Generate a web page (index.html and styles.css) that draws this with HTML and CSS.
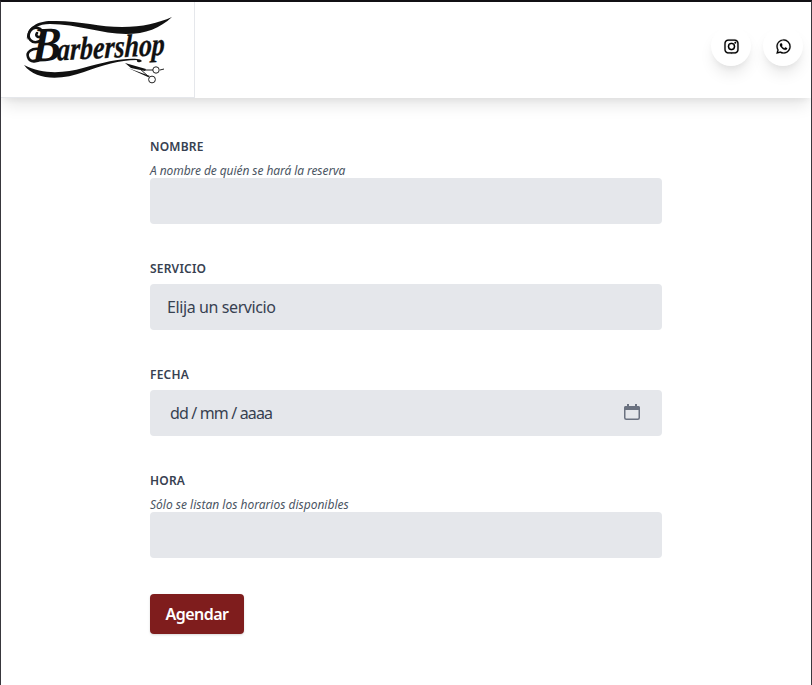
FILE: index.html
```html
<!DOCTYPE html>
<html lang="es">
<head>
<meta charset="utf-8">
<title>Barbershop</title>
<link rel="stylesheet" href="styles.css">
</head>
<body>
<header class="header">
  <a class="brand" href="#" aria-label="Barbershop">
    <svg class="logo" viewBox="0 0 193 95" width="193" height="95">
      <path d="M26 38C25 25 37 19 50 19C76 18 98 25 121 25C142 25 157 21 171 15C159 26 145 32 125 32C101 32 76 22 49 22C38 22 29 26 26 38Z"/>
      <path d="M23 63C42 73 64 71 82 66C104 60 121 56 136 57C141 57 142 60 139 60C137 61 135 59 136 58C118 58 102 63 83 70C61 78 35 79 23 63Z"/>
      <path class="curl" d="M39 39C31 43 25 36 29 29C33 23 42 26 41 32C40 37 33 35 36 31"/>
      <path class="curl" d="M38 47C31 46 25 50 27 55C29 61 36 60 40 57"/>
      <g transform="rotate(-3 28 60) skewX(-5)">
        <text class="letter-b" x="36" y="60" textLength="29" lengthAdjust="spacingAndGlyphs">B</text>
        <text class="letters" x="61" y="60" textLength="108" lengthAdjust="spacingAndGlyphs">arbershop</text>
      </g>
      <path d="M124 61L145 67L144 69L130 66ZM127 66L149 74L147 75Z"/>
      <path class="scissors" d="M143 68H152M159 68L163 67M138 66L148 75"/>
      <circle class="scissors" cx="155" cy="68" r="3.2"/>
      <circle class="scissors" cx="151" cy="77.5" r="3.4"/>
    </svg>
  </a>
  <nav class="social">
    <a class="round" href="#" aria-label="Instagram">
      <svg class="icon" viewBox="0 0 24 24"><path d="M11.999 7.377a4.623 4.623 0 1 0 0 9.248 4.623 4.623 0 0 0 0-9.248zm0 7.627a3.004 3.004 0 1 1 0-6.008 3.004 3.004 0 0 1 0 6.008z"/><circle cx="16.806" cy="7.207" r="1.078"/><path d="M20.533 6.111A4.605 4.605 0 0 0 17.9 3.479a6.606 6.606 0 0 0-2.186-.42c-.963-.042-1.268-.054-3.71-.054s-2.755 0-3.71.054a6.554 6.554 0 0 0-2.184.42 4.6 4.6 0 0 0-2.633 2.632 6.585 6.585 0 0 0-.419 2.186c-.043.962-.056 1.267-.056 3.71 0 2.442 0 2.753.056 3.71.015.748.156 1.486.419 2.187a4.61 4.61 0 0 0 2.634 2.632 6.584 6.584 0 0 0 2.185.45c.963.042 1.268.055 3.71.055s2.755 0 3.71-.055a6.615 6.615 0 0 0 2.186-.419 4.613 4.613 0 0 0 2.633-2.633c.263-.7.404-1.438.419-2.186.043-.962.056-1.267.056-3.71s0-2.753-.056-3.71a6.581 6.581 0 0 0-.421-2.217zm-1.218 9.532a5.043 5.043 0 0 1-.311 1.688 2.987 2.987 0 0 1-1.712 1.711 4.985 4.985 0 0 1-1.67.311c-.95.044-1.218.055-3.654.055-2.438 0-2.687 0-3.655-.055a4.96 4.96 0 0 1-1.669-.311 2.985 2.985 0 0 1-1.719-1.711 5.08 5.08 0 0 1-.311-1.669c-.043-.95-.053-1.218-.053-3.654 0-2.437 0-2.686.053-3.655a5.038 5.038 0 0 1 .311-1.687c.305-.789.93-1.41 1.719-1.712a5.01 5.01 0 0 1 1.669-.311c.951-.043 1.218-.055 3.655-.055s2.687 0 3.654.055a4.96 4.96 0 0 1 1.67.311 2.991 2.991 0 0 1 1.712 1.712 5.08 5.08 0 0 1 .311 1.669c.043.951.055 1.218.055 3.655 0 2.436 0 2.698-.043 3.654z"/></svg>
    </a>
    <a class="round" href="#" aria-label="WhatsApp">
      <svg class="icon" viewBox="0 0 24 24"><path fill-rule="evenodd" d="M18.403 5.633A8.919 8.919 0 0 0 12.053 3c-4.948 0-8.976 4.027-8.978 8.977 0 1.582.413 3.126 1.198 4.488L3 21.116l4.759-1.249a8.981 8.981 0 0 0 4.29 1.093h.004c4.947 0 8.975-4.027 8.977-8.977a8.926 8.926 0 0 0-2.627-6.35m-6.35 13.812h-.003a7.446 7.446 0 0 1-3.798-1.041l-.272-.162-2.824.741.753-2.753-.177-.282a7.448 7.448 0 0 1-1.141-3.971c.002-4.114 3.349-7.461 7.465-7.461a7.413 7.413 0 0 1 5.275 2.188 7.42 7.42 0 0 1 2.183 5.279c-.002 4.114-3.349 7.462-7.461 7.462m4.093-5.589c-.225-.113-1.327-.655-1.533-.73-.205-.075-.354-.112-.504.112s-.58.729-.711.879-.262.168-.486.056-.947-.349-1.804-1.113c-.667-.595-1.117-1.329-1.248-1.554s-.014-.346.099-.458c.101-.1.224-.262.336-.393.112-.131.149-.224.224-.374s.038-.281-.019-.393c-.056-.113-.505-1.217-.692-1.666-.181-.435-.366-.377-.504-.383a9.65 9.65 0 0 0-.429-.008.826.826 0 0 0-.599.28c-.206.225-.785.767-.785 1.871s.804 2.171.916 2.321c.112.15 1.582 2.415 3.832 3.387.536.231.954.369 1.279.473.537.171 1.026.146 1.413.089.431-.064 1.327-.542 1.514-1.066.187-.524.187-.973.131-1.067-.056-.094-.207-.151-.43-.263"/></svg>
    </a>
  </nav>
</header>
<main class="page">
  <form class="form">
    <div class="field">
      <label class="label" for="nombre">NOMBRE</label>
      <p class="hint hint-name">A nombre de quién se hará la reserva</p>
      <input class="control" id="nombre" type="text">
    </div>
    <div class="field">
      <span class="label">SERVICIO</span>
      <div class="control">Elija un servicio</div>
    </div>
    <div class="field">
      <span class="label">FECHA</span>
      <div class="control date">
        <span class="date-text">dd / mm / aaaa</span>
        <svg class="calendar" viewBox="0 0 16 16"><rect x=".75" y="2.75" width="14.5" height="12.5" rx="1.5"/><path class="solid" d="M0 6V4Q0 2 2 2H3V0H5V2H11V0H13V2H14Q16 2 16 4V6Z"/></svg>
      </div>
    </div>
    <div class="field">
      <label class="label" for="hora">HORA</label>
      <p class="hint">Sólo se listan los horarios disponibles</p>
      <input class="control" id="hora" type="text">
    </div>
    <button class="submit" type="button">Agendar</button>
  </form>
</main>
</body>
</html>
```
FILE: styles.css
```css
* { box-sizing: border-box; }
html { height: 100%; overflow: hidden; }
body {
  margin: 0;
  height: 100%;
  border: 1px solid #38373d;
  border-top: 2px solid #111014;
  border-bottom: 0;
  background: #fff;
  color: #374151;
  font: 16px/24px "Noto Sans", sans-serif;
}
.header {
  display: flex;
  justify-content: space-between;
  align-items: center;
  height: 96px;
  padding-right: 8px;
  background: #fff;
  box-shadow: 0 10px 15px -3px rgba(0,0,0,.1), 0 4px 6px -2px rgba(0,0,0,.05);
}
.brand {
  width: 194px;
  height: 96px;
  border-right: 1px solid #e5e7eb;
  border-bottom: 1px solid #e5e7eb;
}
.logo { display: block; overflow: visible; fill: #111; }
.letter-b { font: italic bold 49px "Liberation Serif", serif; }
.letters { font: italic bold 32px "Liberation Serif", serif; stroke: #111; stroke-width: .3; }
.curl { fill: none; stroke: #111; stroke-width: 2.6; stroke-linecap: round; }
.scissors { fill: none; stroke: #222; stroke-width: 1; }
.social { display: flex; gap: 12px; margin-bottom: 8px; }
.round {
  display: flex;
  align-items: center;
  justify-content: center;
  width: 40px;
  height: 40px;
  border-radius: 50%;
  background: #fff;
  box-shadow: 0 10px 15px -3px rgba(0,0,0,.1), 0 4px 6px -2px rgba(0,0,0,.05);
}
.icon { width: 19px; height: 19px; fill: #000; stroke: #000; stroke-width: .3; }
.page { padding: 36px 0 0 149px; }
.form { width: 512px; }
.field { margin-bottom: 32px; }
.field:last-of-type { margin-bottom: 36px; }
.label {
  display: block;
  height: 28px;
  padding-top: 5px;
  font-size: 12px;
  font-weight: 600;
  line-height: 16px;
  letter-spacing: .2px;
}
.hint {
  height: 16px;
  margin: 1px 0 -1px;
  color: #4b5563;
  font-size: 12px;
  font-style: italic;
  line-height: 16px;
}
.hint-name { letter-spacing: -.08px; }
.control {
  display: block;
  width: 100%;
  height: 46px;
  padding: 11px 17px;
  border: 0;
  border-radius: 4px;
  background: #e5e7eb;
  color: #374151;
  font: inherit;
  letter-spacing: -.4px;
}
.date {
  display: flex;
  align-items: center;
  justify-content: space-between;
  padding: 0 22px 0 20px;
}
.date-text { letter-spacing: -.85px; }
.calendar { width: 16px; height: 16px; margin-bottom: 2px; fill: none; stroke: #6b7280; stroke-width: 1.5; }
.solid { fill: #6b7280; stroke: none; }
.submit {
  display: block;
  width: 94px;
  height: 40px;
  padding: 0;
  border: 0;
  border-radius: 4px;
  background: #7f1d1d;
  color: #fff;
  font: 600 16px/24px "Noto Sans", sans-serif;
  letter-spacing: -.55px;
  box-shadow: 0 1px 3px rgba(0,0,0,.1), 0 1px 2px rgba(0,0,0,.06);
}
```
